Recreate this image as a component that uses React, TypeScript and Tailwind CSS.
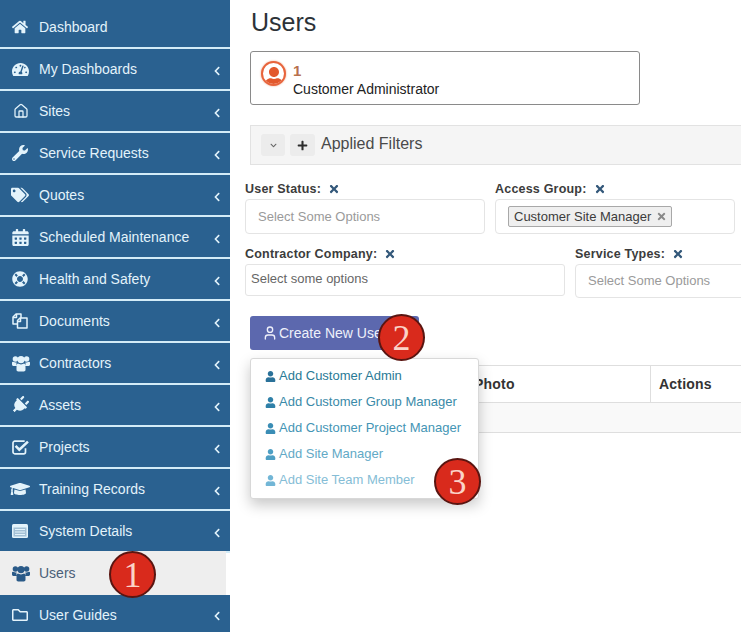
import React from "react";
import {
  FaHome, FaTachometerAlt, FaWrench, FaTags, FaCalendarAlt, FaLifeRing, FaPlug,
  FaGraduationCap, FaRegFolder, FaChevronLeft, FaPlus, FaTimes, FaUser, FaChevronDown,
} from "react-icons/fa";
import { Home, User } from "lucide-react";

function UsersIcon() {
  return (
    <svg width="18" height="17" viewBox="0 0 18 17" fill="currentColor">
      <circle cx="3.4" cy="4" r="2.7" />
      <circle cx="14.6" cy="4" r="2.7" />
      <circle cx="9" cy="4.6" r="3.6" />
      <path d="M0 7.6C0 6.8.9 6.6 1.8 7c1 .5 2 .5 2.8.2-.3 1-.2 2.600.5 3.800H1.300C.5 11 0 10.500 0 9.600zM18 7.600c0-.8-.9-1-1.800-.6-1 .5-2 .5-2.800.2.3 1 .2 2.600-.5 3.800h3.800c.8 0 1.300-.5 1.300-1.400z" />
      <path d="M5.800 8.600c1.800 1.100 4.600 1.100 6.400 0 1 .5 1.300 1.900 1.300 3.700v2.500c0 1-.7 1.700-1.700 1.700H6.200c-1 0-1.700-.7-1.700-1.700v-2.500c0-1.800.3-3.200 1.300-3.700z" />
    </svg>
  );
}

function DocsIcon() {
  return (
    <svg width="16" height="16" viewBox="0 0 16 16" fill="none" stroke="currentColor" strokeWidth="1.500" strokeLinejoin="round">
      <path d="M5.500 11H1V4l3-3h5v4" />
      <path d="M1 4.500h3.500V1" />
      <path d="M5.500 15V7.500l2.500-2.500h7v10z" />
      <path d="M5.500 8.500h3V5" />
    </svg>
  );
}

function CheckIcon() {
  return (
    <svg width="17" height="15" viewBox="0 0 17 15" fill="none" stroke="currentColor" strokeLinecap="square">
      <path d="M13.500 9v3a1.800 1.800 0 0 1-1.800 1.800H2.800A1.800 1.800 0 0 1 1 12V3a1.800 1.800 0 0 1 1.800-1.800h9" strokeWidth="1.700" />
      <path d="M4.500 6.800l2.800 2.800L15 2.500" strokeWidth="2.600" />
    </svg>
  );
}

function CardIcon() {
  return (
    <svg width="16" height="14" viewBox="0 0 16 14">
      <rect width="16" height="14" rx="1.500" fill="currentColor" />
      <rect x="1.500" y="3.500" width="13" height="9" fill="#2a6190" opacity="0.350" />
      <path d="M3 5.500h10M3 8h10M3 10.500h10" stroke="currentColor" strokeWidth="1.100" />
    </svg>
  );
}

const nav: [string, React.ReactNode][] = [
  ["Dashboard", <FaHome size={16} />],
  ["My Dashboards", <FaTachometerAlt size={17} />],
  ["Sites", <Home size={16} strokeWidth={1.9} className="ml-[1px]" />],
  ["Service Requests", <FaWrench size={16} />],
  ["Quotes", <FaTags size={18} className="-ml-[1px]" />],
  ["Scheduled Maintenance", <FaCalendarAlt size={17} className="scale-x-110" />],
  ["Health and Safety", <FaLifeRing size={16} />],
  ["Documents", <DocsIcon />],
  ["Contractors", <UsersIcon />],
  ["Assets", <FaPlug size={18} className="rotate-45 -ml-[1px]" />],
  ["Projects", <CheckIcon />],
  ["Training Records", <FaGraduationCap size={20} className="-ml-[2px]" />],
  ["System Details", <CardIcon />],
];

function Item({ label, icon, first }: { label: string; icon: React.ReactNode; first?: boolean }) {
  return (
    <div className={`flex items-center bg-[#2a6190] text-[#e3f3fb] border-b-2 border-[#d3ecf8] ${first ? "h-[49px] pt-[7px]" : "h-[42px]"}`}>
      <span className="w-[39px] pl-[12px] flex justify-start shrink-0">{icon}</span>
      <span className="text-[14px] flex-1">{label}</span>
      {!first && <FaChevronLeft size={10} className="mr-[8px] mt-[4px]" />}
    </div>
  );
}

function Badge({ n, className }: { n: number; className: string }) {
  return (
    <div className={`absolute w-[47px] h-[47px] rounded-full bg-[#d92a1c] border-2 border-[#5a1511] flex items-center justify-center text-[#fbd3c8] text-[36px] font-['Liberation_Serif',serif] ${className}`}>
      {n}
    </div>
  );
}

function Label({ text }: { text: string }) {
  return (
    <div className="flex items-center gap-[7px] h-[20px] text-[12.5px] font-bold text-[#3c3c3c] tracking-[0.2px]">
      {text}
      <FaTimes size={12} className="text-[#33587a]" />
    </div>
  );
}

const menu: [string, string, string][] = [
  ["Add Customer Admin", "#2a7199", "#2a7a96"],
  ["Add Customer Group Manager", "#2f80a8", "#3a8aa8"],
  ["Add Customer Project Manager", "#3a8db5", "#4495b5"],
  ["Add Site Manager", "#4e9fc4", "#62a9c6"],
  ["Add Site Team Member", "#72b6d6", "#85bdd6"],
];

export default function App() {
  return (
    <div className="relative w-[741px] h-[632px] overflow-hidden bg-white flex font-['Liberation_Sans',Arial,sans-serif]">
      <aside className="w-[230px] h-full shrink-0 flex flex-col bg-white">
        {nav.map(([l, i], k) => <Item key={l} label={l} icon={i} first={k === 0} />)}
        <div className="h-[44px] shrink-0 mr-[4px] -mt-[2px] bg-[#eeeeee] flex items-center text-[#4a6078]">
          <span className="w-[39px] pl-[12px] text-[#2a5a88]"><UsersIcon /></span>
          <span className="text-[14px]">Users</span>
        </div>
        <div className="flex items-center bg-[#2a6190] text-[#e3f3fb] h-[37px] pt-[3px]">
          <span className="w-[39px] pl-[12px]"><FaRegFolder size={16} /></span>
          <span className="text-[14px] flex-1">User Guides</span>
          <FaChevronLeft size={10} className="mr-[8px] mt-[2px]" />
        </div>
      </aside>

      <main className="flex-1 min-w-0 pl-[15px] flex flex-col">
        <h1 className="ml-[6px] mt-[6px] h-[33px] text-[25px] leading-[33px] text-[#2c3238]">Users</h1>
        <div className="ml-[5px] mt-[12px] w-[390px] h-[54px] border border-[#8a8a8a] rounded-[3px] flex items-center pl-[10px] gap-[7px]">
          <div className="-mt-[10px] w-[25px] h-[25px] rounded-full border-2 border-[#e8643c] overflow-hidden flex items-end justify-center bg-white shadow-[0_0_2px_#e8a080]">
            <FaUser size={20} className="text-[#e2582c] -mb-[3px] shrink-0" />
          </div>
          <div className="flex flex-col mt-[2px]">
            <span className="text-[15px] leading-[19px] font-bold text-[#b8704e]">1</span>
            <span className="text-[14px] leading-[18px] text-[#222]">Customer Administrator</span>
          </div>
        </div>
        <div className="ml-[5px] mt-[20px] w-[600px] h-[40px] shrink-0 bg-[#f5f5f5] border-l border-t border-b border-[#e2e2e2] flex items-center pl-[10px]">
          <span className="w-[24px] h-[22px] bg-[#ececec] rounded-[3px] flex items-center justify-center text-[#666]"><FaChevronDown size={7} /></span>
          <span className="ml-[5px] w-[25px] h-[22px] bg-[#ececec] rounded-[3px] flex items-center justify-center text-[#2c2c2c]"><FaPlus size={11} /></span>
          <span className="ml-[6px] -mt-[2px] text-[16px] text-[#4a4a4a]">Applied Filters</span>
        </div>

        <div className="mt-[14px] flex gap-[10px]">
          <div className="w-[240px] shrink-0">
            <Label text="User Status:" />
            <div className="h-[35px] border border-[#e4e4e4] rounded-[4px] flex items-center pl-[12px] text-[13px] text-[#9a9a9a]">Select Some Options</div>
          </div>
          <div className="w-[240px] shrink-0">
            <Label text="Access Group:" />
            <div className="h-[35px] border border-[#e4e4e4] rounded-[4px] flex items-center pl-[12px]">
              <span className="h-[21px] w-[164px] border border-[#a8a8a8] rounded-[2px] bg-[#efefef] flex items-center pl-[5px] gap-[5px] text-[13px] text-[#3c3c3c]">
                Customer Site Manager <FaTimes size={11} className="text-[#888]" />
              </span>
            </div>
          </div>
        </div>

        <div className="mt-[10px] flex gap-[10px]">
          <div className="w-[320px] shrink-0">
            <Label text="Contractor Company:" />
            <div className="h-[32px] border border-[#e4e4e4] rounded-[3px] flex items-start pt-[4px] pl-[5px] text-[13px] text-[#666]">Select some options</div>
          </div>
          <div className="w-[240px] shrink-0">
            <Label text="Service Types:" />
            <div className="h-[34px] border border-[#e4e4e4] rounded-[4px] flex items-center pl-[12px] text-[13px] text-[#9a9a9a]">Select Some Options</div>
          </div>
        </div>

        <button className="ml-[5px] mt-[18px] w-[169px] h-[34px] shrink-0 bg-[#5c68ae] rounded-[3px] flex items-center pl-[12px] gap-[1px] text-[14px] text-[#eef0fa]">
          <User size={16} /> Create New User
        </button>

        <div className="ml-[5px] mt-[15px] w-[600px] shrink-0 text-[14px] font-bold text-[#333] tracking-[0.2px]">
          <div className="flex h-[38px] border-t border-b border-[#dedede]">
            <div className="w-[401px] pl-[224px] flex items-center border-r border-[#dedede]">Photo</div>
            <div className="flex-1 pl-[8px] flex items-center">Actions</div>
          </div>
          <div className="h-[30px] bg-[#f9f9f9] border-b border-[#dedede]" />
        </div>
      </main>

      <div className="absolute left-[250px] top-[358px] w-[229px] h-[141px] bg-white border border-[#d8d8d8] rounded-[3px] shadow-[0_6px_14px_rgba(0,0,0,0.22)] pt-[4px]">
        {menu.map(([t, ic, tx]) => (
          <div key={t} className="h-[26px] pl-[14px] flex items-center gap-[3px] text-[13px]" style={{ color: tx }}>
            <FaUser size={11} style={{ color: ic }} />
            {t}
          </div>
        ))}
      </div>

      <Badge n={1} className="left-[109px] top-[551px]" />
      <Badge n={2} className="left-[378px] top-[314px]" />
      <Badge n={3} className="left-[434px] top-[458px]" />
    </div>
  );
}
